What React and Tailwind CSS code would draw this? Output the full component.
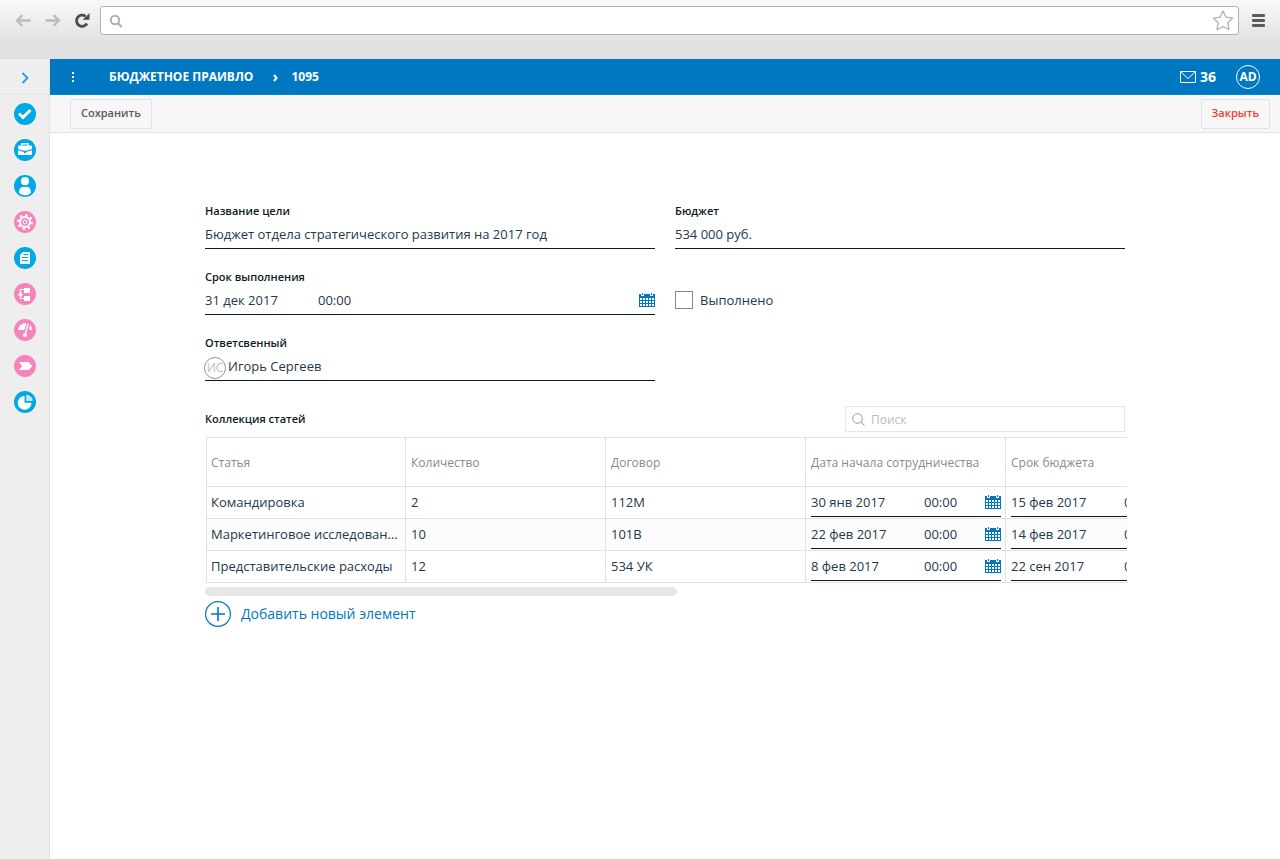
import React, {useState} from 'react';

const menu = [
  { name: 'Задачи', icon: 'check', color: 'bg-[#00a9e6]' },
  { name: 'Портфель', icon: 'case', color: 'bg-[#00a9e6]' },
  { name: 'Сотрудники', icon: 'user', color: 'bg-[#00a9e6]' },
  { name: 'Настройки', icon: 'gear', color: 'bg-[#f584bd]' },
  { name: 'Документы', icon: 'doc', color: 'bg-[#00a9e6]' },
  { name: 'Структура', icon: 'tree', color: 'bg-[#f584bd]' },
  { name: 'Показатели', icon: 'gauge', color: 'bg-[#f584bd]' },
  { name: 'Процессы', icon: 'process', color: 'bg-[#f584bd]' },
  { name: 'Отчёты', icon: 'pie', color: 'bg-[#00a9e6]' },
];

const columns = ['Статья', 'Количество', 'Договор', 'Дата начала сотрудничества', 'Срок бюджета'];

const rows = [
  { title: 'Командировка', count: '2', contract: '112М', start: '30 янв 2017', end: '15 фев 2017' },
  { title: 'Маркетинговое исследование', count: '10', contract: '101В', start: '22 фев 2017', end: '14 фев 2017' },
  { title: 'Представительские расходы', count: '12', contract: '534 УК', start: '8 фев 2017', end: '22 сен 2017' },
];

const shapes = {
  check: <path d="M5 10.500l4 3.800 7.500-7.300" fill="none" stroke="#fff" strokeWidth="3" />,
  case: (
    <>
      <path d="M8 6.500V4.700h6v1.800" fill="none" stroke="#fff" strokeWidth="1.400" />
      <path d="M5 6.500h12a1 1 0 0 1 1 1V10q-7 3.400-14 0V7.500a1 1 0 0 1 1-1z" fill="#fff" />
      <path d="M4 11.300q3 1.400 6 1.600v1h2v-1q3-.2 6-1.600V15a1 1 0 0 1-1 1H5a1 1 0 0 1-1-1z" fill="#fff" />
    </>
  ),
  user: (
    <>
      <circle cx="11" cy="6.200" r="4.100" fill="#fff" />
      <path d="M5 18c0-4 1.500-6 4-6.200q2 .8 4 0c2.500.2 4 2.200 4 6.200q-6 4.800-12 0z" fill="#fff" />
    </>
  ),
  gear: (
    <g fill="none" stroke="#fff">
      <circle cx="11" cy="11" r="6.800" strokeWidth="2.400" strokeDasharray="2.300 3.040" />
      <circle cx="11" cy="11" r="5" strokeWidth="2" />
      <circle cx="11" cy="11" r="2" strokeWidth="1" />
    </g>
  ),
  doc: (
    <>
      <path d="M9 5h7v12H6V8z" fill="#fff" />
      <path d="M9.500 7.500H14M8 10.500h6M8 13.500h6" stroke="#00a9e6" strokeWidth="1.200" />
    </>
  ),
  tree: (
    <>
      <path d="M10.500 6.500h-4v9h4" fill="none" stroke="#fff" strokeWidth="1.200" />
      <path d="M10 5h6v5h-6zM10 13h6v5h-6zM6.500 9l2.500 2.500L6.500 14 4 11.500z" fill="#fff" />
    </>
  ),
  gauge: (
    <>
      <path d="M4 11A7.500 7.500 0 0 1 12.300 4.200L10.300 11zM15 11l1-5.200q2 2 2.200 5.200z" fill="#fff" />
      <path d="M14 4.500L11.300 15" stroke="#fff" strokeWidth="1.400" />
      <circle cx="11" cy="16" r="2" fill="#fff" />
    </>
  ),
  process: <path d="M5 7h9.500l4 4-4 4H5l3-4z" fill="#fff" />,
  pie: (
    <>
      <path d="M10.500 5v6.800h7A6.900 6.900 0 1 1 10.500 5z" fill="#fff" />
      <path d="M12.200 3.700v6.400h6.500a6.500 6.500 0 0 0-6.500-6.400z" fill="#fff" fillOpacity=".75" />
    </>
  ),
};

const CalendarIcon = () => (
  <svg className="h-[14px] w-4" viewBox="0 0 16 14" fill="#0077c1" shapeRendering="crispEdges">
    <path d="M0 1h2v2h3V1h6v2h3V1h2v13H0zM3 0h1v2H3zM12 0h1v2h-1z" />
    <path d="M1 5h2v2H1zM4 5h2v2H4zM7 5h2v2H7zM10 5h2v2h-2zM13 5h2v2h-2zM1 8h2v2H1zM4 8h2v2H4zM7 8h2v2H7zM10 8h2v2h-2zM13 8h2v2h-2zM1 11h2v2H1zM4 11h2v2H4zM7 11h2v2H7zM10 11h2v2h-2zM13 11h2v2h-2z" fill="#fff" />
  </svg>
);

const DateTime = ({ id, label, date }) => (
  <div className="flex h-[30px] items-center border-b border-[#0b1a26]">
    <input id={id} aria-label={label} defaultValue={date} className="w-[113px] shrink-0 bg-transparent outline-none" />
    <input aria-label={`${label}, время`} defaultValue="00:00" className="min-w-0 flex-1 bg-transparent outline-none" />
    <button aria-label="Календарь"><CalendarIcon /></button>
  </div>
);

const Field = ({ id, label, children }) => (
  <div>
    <label htmlFor={id} className="block text-[11px] leading-4 font-semibold text-[#0b1a26]">{label}</label>
    {children}
  </div>
);

const BrowserBar = () => (
  <div className="h-[59px] bg-linear-to-b from-[#f9f9f9] to-[#e0e0e0] to-75% pt-[6px]">
    <div className="flex items-center px-[15px]">
      <button aria-label="Назад">
        <svg className="h-4 w-4" viewBox="0 0 16 16" fill="none" stroke="#bcbcbc" strokeWidth="2.400">
          <path d="M7.500 2L2 7.500 7.500 13M2.500 7.500h13" />
        </svg>
      </button>
      <button aria-label="Вперёд" className="ml-[14px]">
        <svg className="h-4 w-4" viewBox="0 0 16 16" fill="none" stroke="#bcbcbc" strokeWidth="2.400">
          <path d="M8.500 2L14 7.500 8.500 13M13.500 7.500H.5" />
        </svg>
      </button>
      <button aria-label="Обновить" className="ml-[13px]">
        <svg className="h-4 w-4" viewBox="0 0 16 16">
          <path d="M13 10.500A5.600 5.600 0 1 1 11.500 3.300" fill="none" stroke="#4d4d4d" strokeWidth="2.800" />
          <path d="M15.500 0v6.800H8.700z" fill="#4d4d4d" />
        </svg>
      </button>
      <div className="ml-[10px] flex h-[29px] flex-1 items-center rounded-[3px] border border-[#b3b3b3] bg-white pr-1 pl-2">
        <svg className="h-[14px] w-[14px]" viewBox="0 0 14 14" fill="none" stroke="#b0b0b0" strokeWidth="2">
          <circle cx="6" cy="6" r="4.200" />
          <path d="M9 9l3.500 4" />
        </svg>
        <input aria-label="Адрес" className="ml-2 min-w-0 flex-1 outline-none" />
        <button aria-label="В закладки">
          <svg className="h-[22px] w-[22px]" viewBox="0 0 22 22" fill="none" stroke="#b0b0b0" strokeWidth="1.300" strokeLinejoin="round">
            <path d="M11 1l3 6.200 6.700.9-4.900 4.700 1.200 6.900-6-3.200-6 3.200 1.200-6.900L1.300 8.100 8 7.200z" />
          </svg>
        </button>
      </div>
      <button aria-label="Меню" className="ml-[13px] flex flex-col gap-[2px]">
        <span className="h-[3px] w-[13px] rounded-[1px] bg-[#5c5c5c]" />
        <span className="h-[3px] w-[13px] rounded-[1px] bg-[#5c5c5c]" />
        <span className="h-[3px] w-[13px] rounded-[1px] bg-[#5c5c5c]" />
      </button>
    </div>
  </div>
);

const Sidebar = () => (
  <aside className="w-[50px] shrink-0 border-r border-[#dfe3e6] bg-[#eeeeee]">
    <button aria-label="Развернуть" className="flex h-9 w-full items-center justify-center border-b border-[#e2e4e6] pt-[2px]">
      <svg className="h-3 w-2" viewBox="0 0 8 12" fill="none" stroke="#1ba0dc" strokeWidth="1.800">
        <path d="M1.500 1l5 5-5 5" />
      </svg>
    </button>
    <nav className="flex flex-col items-center gap-[14px] pt-2">
      {menu.map((item) => (
        <a key={item.icon} href="#" aria-label={item.name} className={`h-[22px] w-[22px] rounded-full ${item.color}`}>
          <svg className="h-[22px] w-[22px]" viewBox="0 0 22 22">{shapes[item.icon]}</svg>
        </a>
      ))}
    </nav>
  </aside>
);

const App = () => {
  const [done, setDone] = useState(false);

  return (
    <div className="flex min-h-screen flex-col bg-white font-['Open_Sans',sans-serif] text-[13px] leading-5 text-[#24384a]">
      <BrowserBar />
      <div className="flex flex-1">
        <Sidebar />
        <div className="min-w-0 flex-1">
          {/* Header */}
          <header className="flex h-9 items-center border-b border-[#0090cf] bg-[#0077c1] pr-5 text-xs font-bold text-white">
            <button aria-label="Действия" className="ml-[22px] flex flex-col gap-[2px]">
              <span className="h-[2px] w-[2px] bg-white" />
              <span className="h-[2px] w-[2px] bg-white" />
              <span className="h-[2px] w-[2px] bg-white" />
            </button>
            <a href="#" className="ml-[35px]">БЮДЖЕТНОЕ ПРАИВЛО</a>
            <svg className="mt-[2px] ml-5 h-2 w-[5px]" viewBox="0 0 5 8" fill="none" stroke="#fff" strokeWidth="2">
              <path d="M1 1l2.500 3L1 7" />
            </svg>
            <span className="ml-[13px]">1095</span>
            <a href="#" className="ml-auto flex items-center gap-1 text-sm">
              <svg className="h-3 w-4" viewBox="0 0 16 12" fill="none" stroke="#fff">
                <path d="M.5.5h15v11H.5zM1 1l7 6.500L15 1" />
              </svg>
              36
            </a>
            <button className="ml-5 h-6 w-6 rounded-full border border-white">
              <span className="flex items-center justify-center">AD</span>
            </button>
          </header>

          {/* Toolbar */}
          <div className="flex h-[38px] items-center justify-between border-b border-[#dde4e7] bg-[#f8f6f7] pr-[10px] pl-5 text-[11px] font-semibold">
            <button className="h-[30px] rounded-[2px] border border-[#dde4e7] px-[10px] pb-[2px] text-[#5a5a5a]">Сохранить</button>
            <button className="h-[30px] rounded-[2px] border border-[#dde4e7] px-[10px] pb-[2px] text-[#ea4335]">Закрыть</button>
          </div>

          {/* Form */}
          <main className="mx-auto max-w-[920px] pt-[70px]">
            <div className="grid grid-cols-2 gap-5">
              <Field id="goal" label="Название цели">
                <input id="goal" defaultValue="Бюджет отдела стратегического развития на 2017 год" className="h-[30px] w-full border-b border-[#0b1a26] outline-none" />
              </Field>
              <Field id="budget" label="Бюджет">
                <input id="budget" defaultValue="534 000 руб." className="h-[30px] w-full border-b border-[#0b1a26] outline-none" />
              </Field>
              <Field id="due" label="Срок выполнения">
                <DateTime id="due" label="Срок выполнения" date="31 дек 2017" />
              </Field>
              <label className="flex items-center gap-[7px] self-end pb-[5px]">
                <input
                  type="checkbox"
                  checked={done}
                  onChange={() => setDone(!done)}
                  className="h-[18px] w-[18px] appearance-none border border-[#7c8b96] checked:bg-[#0077c1]"
                />
                Выполнено
              </label>
              <Field id="owner" label="Ответсвенный">
                <div className="flex h-[30px] items-center gap-[2px] border-b border-[#0b1a26]">
                  <span className="-ml-px mt-1 flex h-[22px] w-[22px] shrink-0 items-center justify-center rounded-full border border-[#8d979e] text-xs font-medium text-[#bdbdbd]">ИС</span>
                  <input id="owner" defaultValue="Игорь Сергеев" className="min-w-0 flex-1 outline-none" />
                </div>
              </Field>
            </div>

            <div className="mt-[25px] flex items-center justify-between">
              <h2 className="text-[11px] font-semibold text-[#0b1a26]">Коллекция статей</h2>
              <div className="flex h-[26px] w-[280px] items-center gap-[6px] border border-[#e3e8ea] px-[6px]">
                <svg className="h-[13px] w-[13px]" viewBox="0 0 13 13" fill="none" stroke="#9a9a9a">
                  <circle cx="5.500" cy="5.500" r="4.800" />
                  <path d="M9 9l3.500 3.500" />
                </svg>
                <input aria-label="Поиск" placeholder="Поиск" className="min-w-0 flex-1 pt-[2px] text-xs outline-none placeholder:text-[#b4c0c8]" />
              </div>
            </div>

            <div className="mt-[5px] -mr-[2px] overflow-hidden pl-px">
              <table className="w-[1000px] table-fixed border-separate border-spacing-0">
                <thead>
                  <tr className="h-[50px]">
                    {columns.map((name) => (
                      <th key={name} className="border-t border-r border-b border-[#dbe3e6] pt-[2px] pl-[5px] text-left text-xs font-normal text-[#7f8c95] first:border-l first:pl-1">
                        {name}
                      </th>
                    ))}
                  </tr>
                </thead>
                <tbody>
                  {rows.map((row) => (
                    <tr key={row.title} className="h-8 even:bg-[#fcfcfc]">
                      <td className="truncate border-r border-b border-l border-[#dbe3e6] pr-[5px] pb-[2px] pl-1">{row.title}</td>
                      <td className="border-r border-b border-[#dbe3e6] pb-[2px] pl-[5px]">{row.count}</td>
                      <td className="border-r border-b border-[#dbe3e6] pb-[2px] pl-[5px]">{row.contract}</td>
                      <td className="border-r border-b border-[#dbe3e6] pr-1 pl-[5px] align-top">
                        <DateTime label="Дата начала сотрудничества" date={row.start} />
                      </td>
                      <td className="border-r border-b border-[#dbe3e6] pr-1 pl-[5px] align-top">
                        <DateTime label="Срок бюджета" date={row.end} />
                      </td>
                    </tr>
                  ))}
                </tbody>
              </table>
            </div>
            <div className="mt-1 h-[9px] w-[472px] rounded-full bg-[#e6e6e6]" />

            <button className="mt-[5px] flex items-center gap-[10px] text-sm text-[#0077c1]">
              <svg className="h-[26px] w-[26px]" viewBox="0 0 26 26" fill="none" stroke="#0077c1">
                <circle cx="13" cy="13" r="12.400" strokeWidth="1.200" />
                <path d="M13 6v14M6 13h14" strokeWidth="1.600" />
              </svg>
              Добавить новый элемент
            </button>
          </main>
        </div>
      </div>
    </div>
  );
};

export default App;
